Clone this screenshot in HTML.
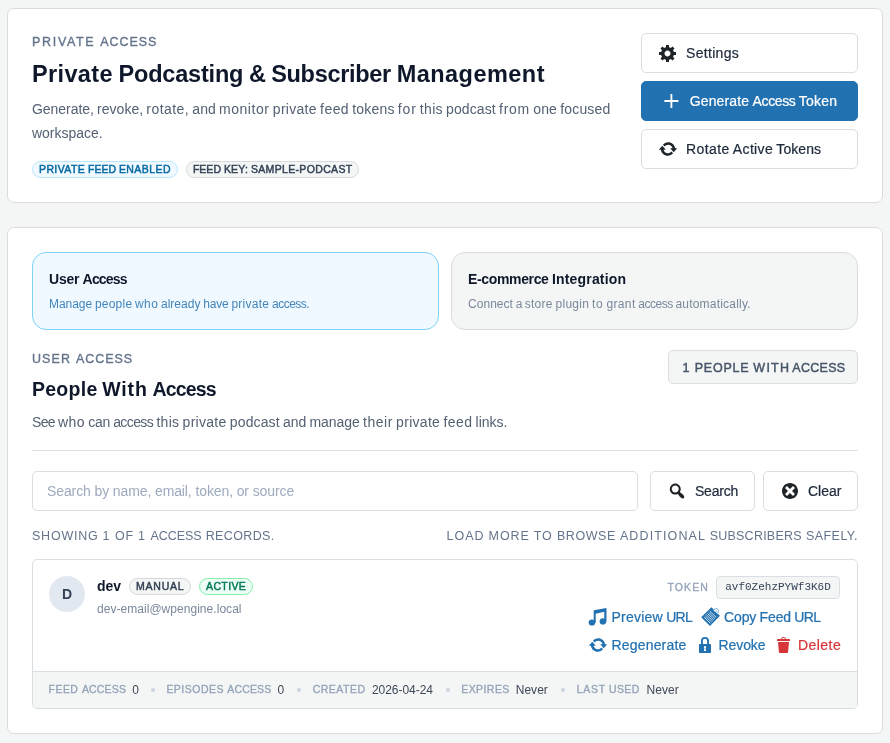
<!DOCTYPE html>
<html lang="en">
<head>
<meta charset="utf-8">
<title>Private Podcasting &amp; Subscriber Management</title>
<style>
:root{--ff:"Liberation Sans",sans-serif;--mono:"Liberation Mono",monospace}
*{box-sizing:border-box;margin:0;padding:0}
html,body{width:890px;height:743px;overflow:hidden}
body{will-change:transform;background:#f4f6f6;font-family:var(--ff);color:#0f172a;font-size:14px;position:relative}
.abs{position:absolute;white-space:nowrap}
.w{display:inline-block;white-space:nowrap}
.card{position:absolute;left:7px;width:876px;background:#fff;border:1px solid #dcdcde;border-radius:7px}
#c1{top:8px;height:195px}
#c2{top:227px;height:507px}
#c2>.in{position:absolute;left:0;top:1px;width:874px;height:500px}
.eyebrow{font-size:12.5px;letter-spacing:.14em;color:#64748b;font-weight:500;line-height:16px}
h1{font-size:23.5px;font-weight:700;color:#0f172a;line-height:30px}
h2{font-size:19.5px;font-weight:700;color:#0f172a;line-height:26px}
.desc{color:#546173;font-size:14px;line-height:24px}
.chip{display:inline-block;border:1px solid #d5d8dc;border-radius:999px;background:#f4f6f6;color:#334155;font-size:10.5px;font-weight:400;-webkit-text-stroke:.45px currentColor;letter-spacing:.02em;height:17px;line-height:15px;padding:0 6px;white-space:nowrap}
.chip.blue{background:#f0f9ff;border-color:#bae6fd;color:#0369a1}
.chip.green{background:#ecfdf5;border-color:#86efac;color:#047857}
.btn{position:absolute;display:flex;align-items:center;height:40px;border:1px solid #dadde2;border-radius:5px;background:#fff;color:#1e293b;font-size:14px;font-weight:500;padding:0 16px;gap:8px;white-space:nowrap}
button.btn{font-family:inherit;margin:0;cursor:pointer;text-align:left;line-height:normal;-webkit-appearance:none;appearance:none}
a.act{text-decoration:none;cursor:pointer}
.btn{-webkit-text-stroke:.22px currentColor}
.act{-webkit-text-stroke:.22px currentColor}
.eyebrow{-webkit-text-stroke:.35px currentColor}
.foot .l{-webkit-text-stroke:.3px currentColor}
.btn svg{width:20px;height:20px;flex:none;fill:#1d2327}
.btn.primary svg{fill:#fff}
.btn.primary{background:#2271b1;border-color:#2271b1;color:#fff;justify-content:center}
.tab{position:absolute;top:23px;width:407px;height:78px;border:1px solid #dcdcde;border-radius:14px;background:#f4f6f6;padding:16px}
.tab.on{background:#f0f9ff;border-color:#7dd3fc}
.tab .tt{font-size:14px;font-weight:700;line-height:20px;color:#0f172a;white-space:nowrap}
.tab .ts{font-size:12px;line-height:18px;color:#7a879b;margin-top:6px;white-space:nowrap}
.tab.on .ts{color:#4185bc}
.srch{border:1px solid #dadde2;border-radius:5px;background:#fff;padding:0 14px;font-family:inherit;font-size:14px;color:#0f172a;outline:none;margin:0;letter-spacing:-.11px}
.srch::placeholder{color:#9daabe;opacity:1}
.meta{font-size:12.5px;letter-spacing:.08em;color:#64748b;line-height:16px}
.rec{position:absolute;left:24px;top:330px;width:826px;height:150px;border:1px solid #d9dee5;border-radius:5px;background:#fff;overflow:hidden}
.foot{position:absolute;left:0;right:0;top:111px;height:38px;border-top:1px solid #d9dee5;background:#f4f6f6;white-space:nowrap}
.foot .l{position:absolute;top:10px;line-height:14px;font-size:10.5px;letter-spacing:.08em;font-weight:500;color:#94a3b8}
.foot .v{position:absolute;top:10px;line-height:16px;font-size:12px;color:#3d4756}
.foot i{position:absolute;top:16px;width:4px;height:4px;border-radius:50%;background:#cbd5e1}
.act{position:absolute;display:flex;align-items:center;font-size:14px;font-weight:500;color:#2271b1;height:20px;line-height:20px;white-space:nowrap}
.act svg{width:20px;height:20px;fill:currentColor;margin-right:4px;flex:none}
.act.red{color:#d63638}
</style>
</head>
<body>
<div class="card" id="c1">
  <div class="abs eyebrow" style="left:24px;top:25px"><span class="t"><span class="w" style="width:68.23px;letter-spacing:1.68px">PRIVATE </span><span class="w" style="width:57.11px;letter-spacing:0.95px">ACCESS</span></span></div>
  <h1 class="abs" style="left:24px;top:50px"><span class="t"><span class="w" style="width:86.62px;letter-spacing:0.36px">Private </span><span class="w" style="width:130.27px;letter-spacing:-0.21px">Podcasting </span><span class="w" style="width:22.31px;letter-spacing:-0.38px">&amp; </span><span class="w" style="width:125.47px;letter-spacing:-0.3px">Subscriber </span><span class="w" style="width:148.33px;letter-spacing:0.47px">Management</span></span></h1>
  <div class="abs desc" style="left:24px;top:88px"><span class="t"><span class="w" style="width:65.09px;letter-spacing:-0.04px">Generate, </span><span class="w" style="width:49.25px;letter-spacing:0.02px">revoke, </span><span class="w" style="width:46.03px;letter-spacing:0.44px">rotate, </span><span class="w" style="width:26.61px;letter-spacing:0.01px">and </span><span class="w" style="width:53.86px;letter-spacing:0.56px">monitor </span><span class="w" style="width:47.31px;letter-spacing:0.29px">private </span><span class="w" style="width:32.19px;letter-spacing:0.43px">feed </span><span class="w" style="width:45.52px;letter-spacing:0.17px">tokens </span><span class="w" style="width:22.05px;letter-spacing:0.83px">for </span><span class="w" style="width:26.2px;letter-spacing:0.3px">this </span><span class="w" style="width:53.03px;letter-spacing:0.11px">podcast </span><span class="w" style="width:34.12px;letter-spacing:0.73px">from </span><span class="w" style="width:27.14px;letter-spacing:0.19px">one </span><span class="w" style="width:50.02px;letter-spacing:0.14px">focused</span></span><br><span class="t"><span class="w" style="width:70.53px;letter-spacing:-0.03px">workspace.</span></span></div>
  <div class="abs" style="left:24px;top:152px;display:flex;gap:8px">
    <span class="chip blue"><span class="t"><span class="w" style="width:48.94px;letter-spacing:0.39px">PRIVATE </span><span class="w" style="width:31px;letter-spacing:0.04px">FEED </span><span class="w" style="width:51.94px;letter-spacing:0.42px">ENABLED</span></span></span><span class="chip"><span class="t"><span class="w" style="width:31px;letter-spacing:0.04px">FEED </span><span class="w" style="width:27.03px;letter-spacing:0.21px">KEY: </span><span class="w" style="width:101.59px;letter-spacing:0.34px">SAMPLE-PODCAST</span></span></span>
  </div>
  <button type="button" class="btn" style="left:633px;top:24px;width:217px">
    <svg viewBox="0 0 20 20"><path d="M18 12h-2.180c-.170.700-.440 1.350-.810 1.930l1.540 1.540-2.100 2.100-1.540-1.540c-.580.360-1.230.630-1.910.790v2.180h-3v-2.180c-.680-.160-1.330-.430-1.910-.790l-1.540 1.540-2.120-2.120 1.540-1.540c-.360-.580-.630-1.230-.790-1.910h-2.180v-2.970h2.170c.160-.700.440-1.350.800-1.940l-1.540-1.540 2.100-2.100 1.540 1.540c.580-.370 1.240-.640 1.930-.810v-2.180h3v2.180c.680.160 1.330.430 1.910.790l1.540-1.540 2.120 2.120-1.540 1.540c.360.590.640 1.240.800 1.940h2.170v2.970zM9.500 13.500c1.660 0 3-1.340 3-3s-1.340-3-3-3-3 1.340-3 3 1.340 3 3 3z"/></svg>
    <span class="t"><span class="w" style="width:53.09px;letter-spacing:0.31px">Settings</span></span>
  </button>
  <button type="button" class="btn primary" style="left:633px;top:72px;width:217px">
    <svg viewBox="0 0 20 20" style="overflow:visible"><path d="M16.400 9.080v1.840h-6.080v6.080h-1.840v-6.080h-6.080v-1.840h6.080v-6.080h1.840v6.080z"/></svg>
    <span class="t"><span class="w" style="width:62.88px;letter-spacing:0.15px">Generate </span><span class="w" style="width:46.17px;letter-spacing:-0.37px">Access </span><span class="w" style="width:38.58px;letter-spacing:0.24px">Token</span></span>
  </button>
  <button type="button" class="btn" style="left:633px;top:120px;width:217px">
    <svg viewBox="0 0 20 20"><path d="M10.200 3.280c3.530 0 6.430 2.610 6.920 6h2.080l-3.500 4-3.500-4h2.320c-.450-1.970-2.210-3.450-4.320-3.450-1.450 0-2.730.710-3.540 1.780l-1.720-1.960c1.270-1.450 3.150-2.370 5.260-2.370zM9.800 16.720c-3.520 0-6.430-2.610-6.920-6h-2.080l3.500-4c1.170 1.330 2.330 2.670 3.500 4h-2.320c.450 1.970 2.210 3.450 4.320 3.450 1.450 0 2.730-.710 3.540-1.780l1.720 1.960c-1.260 1.450-3.150 2.370-5.260 2.370z"/></svg>
    <span class="t"><span class="w" style="width:46.86px;letter-spacing:0.39px">Rotate </span><span class="w" style="width:43.45px;letter-spacing:0.34px">Active </span><span class="w" style="width:44.89px;letter-spacing:0.09px">Tokens</span></span>
  </button>
</div>

<div class="card" id="c2"><div class="in">
  <div class="tab on" style="left:24px"><div class="tt"><span class="t"><span class="w" style="width:33.58px;letter-spacing:-0.22px">User </span><span class="w" style="width:44.22px;letter-spacing:-0.8px">Access</span></span></div><div class="ts"><span class="t"><span class="w" style="width:45.89px;letter-spacing:-0.04px">Manage </span><span class="w" style="width:40.2px;letter-spacing:0.23px">people </span><span class="w" style="width:25.94px;letter-spacing:0.39px">who </span><span class="w" style="width:42.2px;letter-spacing:0.01px">already </span><span class="w" style="width:28.22px;letter-spacing:-0.14px">have </span><span class="w" style="width:40.55px;letter-spacing:0.25px">private </span><span class="w" style="width:37.25px;letter-spacing:-0.49px">access.</span></span></div></div>
  <div class="tab" style="left:443px"><div class="tt"><span class="t"><span class="w" style="width:83.91px;letter-spacing:-0.35px">E-commerce </span><span class="w" style="width:74.33px;letter-spacing:0.18px">Integration</span></span></div><div class="ts"><span class="t"><span class="w" style="width:47.75px;letter-spacing:0.04px">Connect </span><span class="w" style="width:8.92px;letter-spacing:-0.52px">a </span><span class="w" style="width:30.84px;letter-spacing:0.28px">store </span><span class="w" style="width:36.44px;letter-spacing:0.28px">plugin </span><span class="w" style="width:14.47px;letter-spacing:0.85px">to </span><span class="w" style="width:31.94px;letter-spacing:0.37px">grant </span><span class="w" style="width:37.05px;letter-spacing:-0.51px">access </span><span class="w" style="width:75.42px;letter-spacing:0.21px">automatically.</span></span></div></div>

  <div class="abs eyebrow" style="left:24px;top:122px"><span class="t"><span class="w" style="width:43.97px;letter-spacing:1.09px">USER </span><span class="w" style="width:57.11px;letter-spacing:0.95px">ACCESS</span></span></div>
  <h2 class="abs" style="left:24px;top:147px"><span class="t"><span class="w" style="width:70.22px;letter-spacing:0.26px">People </span><span class="w" style="width:50.27px;letter-spacing:0.86px">With </span><span class="w" style="width:63.16px;letter-spacing:-0.86px">Access</span></span></h2>
  <div class="abs desc" style="left:24px;top:181px"><span class="t"><span class="w" style="width:26.02px;letter-spacing:-0.71px">See </span><span class="w" style="width:30.28px;letter-spacing:0.46px">who </span><span class="w" style="width:24.89px;letter-spacing:-0.3px">can </span><span class="w" style="width:43.23px;letter-spacing:-0.59px">access </span><span class="w" style="width:26.2px;letter-spacing:0.3px">this </span><span class="w" style="width:47.31px;letter-spacing:0.29px">private </span><span class="w" style="width:53.03px;letter-spacing:0.11px">podcast </span><span class="w" style="width:26.61px;letter-spacing:0.01px">and </span><span class="w" style="width:53.47px;letter-spacing:-0.06px">manage </span><span class="w" style="width:33.16px;letter-spacing:0.54px">their </span><span class="w" style="width:47.31px;letter-spacing:0.29px">private </span><span class="w" style="width:32.19px;letter-spacing:0.43px">feed </span><span class="w" style="width:31.66px;letter-spacing:-0.04px">links.</span></span></div>
  <div class="abs" style="left:660px;top:121px;width:190px;height:34px;border:1px solid #dadde2;border-radius:5px;background:#f4f6f6;text-align:center;font-size:12.5px;font-weight:400;-webkit-text-stroke:.45px currentColor;letter-spacing:.07em;color:#475569;line-height:34px"><span class="t"><span class="w" style="width:12.25px;letter-spacing:1.3px">1 </span><span class="w" style="width:58.55px;letter-spacing:0.75px">PEOPLE </span><span class="w" style="width:41.03px;letter-spacing:1.27px">WITH </span><span class="w" style="width:53.17px;letter-spacing:0.29px">ACCESS</span></span></div>
  <div class="abs" style="left:24px;top:221px;width:826px;height:1px;background:#dcdfe4"></div>

  <input class="abs srch" type="text" placeholder="Search by name, email, token, or source" style="left:24px;top:242px;width:606px;height:40px">
  <button type="button" class="btn" style="left:642px;top:242px;width:105px">
    <svg viewBox="0 0 20 20"><path d="M12.140 4.180c1.870 1.870 2.110 4.750.720 6.890.120.100.220.210.360.310.200.160.470.360.810.590.340.240.560.390.660.470.420.310.730.570.940.780.320.320.600.650.840 1 .250.350.440.690.590 1.040.140.350.210.680.180 1-.020.320-.140.590-.360.810s-.490.340-.810.360c-.310.020-.650-.040-.990-.190-.350-.140-.700-.340-1.040-.590-.350-.240-.680-.520-1-.840-.210-.210-.470-.520-.770-.930-.100-.130-.250-.350-.470-.660-.220-.320-.400-.570-.560-.780-.160-.200-.290-.350-.440-.500-2.070 1.090-4.690.760-6.440-.980-2.140-2.150-2.140-5.640 0-7.780 2.150-2.150 5.630-2.150 7.780 0zM10.730 10.540c1.360-1.370 1.360-3.580 0-4.950-1.370-1.370-3.590-1.370-4.950 0-1.370 1.370-1.370 3.580 0 4.950 1.360 1.370 3.580 1.370 4.950 0z"/></svg>
    <span class="t"><span class="w" style="width:43.05px;letter-spacing:-0.22px">Search</span></span>
  </button>
  <button type="button" class="btn" style="left:755px;top:242px;width:95px">
    <svg viewBox="0 0 20 20"><path d="M10 2c4.420 0 8 3.580 8 8s-3.580 8-8 8-8-3.580-8-8 3.580-8 8-8zM15 13l-3-3 3-3-2-2-3 3-3-3-2 2 3 3-3 3 2 2 3-3 3 3z"/></svg>
    <span class="t"><span class="w" style="width:33.41px;letter-spacing:-0.01px">Clear</span></span>
  </button>

  <div class="abs meta" style="left:24px;top:299px"><span class="t"><span class="w" style="width:70.52px;letter-spacing:0.77px">SHOWING </span><span class="w" style="width:12.41px;letter-spacing:1.42px">1 </span><span class="w" style="width:23.05px;letter-spacing:0.83px">OF </span><span class="w" style="width:12.41px;letter-spacing:1.42px">1 </span><span class="w" style="width:55.31px;letter-spacing:-0.02px">ACCESS </span><span class="w" style="width:68.95px;letter-spacing:0.37px">RECORDS.</span></span></div>
  <div class="abs meta" style="right:24px;top:299px;margin-right:0"><span class="t"><span class="w" style="width:42.07px;letter-spacing:1px">LOAD </span><span class="w" style="width:45.08px;letter-spacing:0.89px">MORE </span><span class="w" style="width:23.27px;letter-spacing:1.04px">TO </span><span class="w" style="width:62.95px;letter-spacing:0.56px">BROWSE </span><span class="w" style="width:89.75px;letter-spacing:1.12px">ADDITIONAL </span><span class="w" style="width:96.33px;letter-spacing:0.24px">SUBSCRIBERS </span><span class="w" style="width:52.05px;letter-spacing:0.45px">SAFELY.</span></span></div>

  <div class="rec">
    <div class="abs" style="left:16px;top:16px;width:36px;height:36px;border-radius:50%;background:#e2e8f0;color:#334155;font-weight:700;font-size:14px;line-height:36px;text-align:center"><span class="t"><span class="w" style="width:10.22px;letter-spacing:0.09px">D</span></span></div>
    <div class="abs" style="left:64px;top:16px;font-size:14px;font-weight:700;line-height:20px;color:#0f172a"><span class="t"><span class="w" style="width:23.95px;letter-spacing:-0.06px">dev</span></span></div>
    <span class="chip abs" style="left:96px;top:18px"><span class="t"><span class="w" style="width:48.38px;letter-spacing:0.77px">MANUAL</span></span></span>
    <span class="chip green abs" style="left:166px;top:18px"><span class="t"><span class="w" style="width:40.23px;letter-spacing:0.38px">ACTIVE</span></span></span>
    <div class="abs" style="left:64px;top:40px;font-size:12px;line-height:18px;color:#7a879b"><span class="t"><span class="w" style="width:144.59px;letter-spacing:0.04px">dev-email@wpengine.local</span></span></div>

    <div class="abs" style="right:148px;top:20px;font-size:10.5px;letter-spacing:.08em;font-weight:400;-webkit-text-stroke:.3px currentColor;color:#94a3b8;line-height:14px"><span class="t"><span class="w" style="width:41.5px;letter-spacing:1.1px">TOKEN</span></span></div>
    <div class="abs" style="left:683px;top:16px;width:124px;height:23px;border:1px solid #d9dee5;border-radius:4px;background:#f4f6f6;font-family:var(--mono);font-size:11px;line-height:21px;text-align:center;color:#334155">avf0ZehzPYWf3K6D</div>

    <a class="act" style="left:554.5px;top:47px"><svg viewBox="0 0 20 20"><path d="M5.700 3.300L18.500 1.070V14.600H16.250V4.700L7.750 6.750V15.600H5.700z"/><ellipse cx="3.950" cy="15.500" rx="3.300" ry="3.100"/><ellipse cx="14.900" cy="14.450" rx="3.300" ry="3.100"/></svg><span class="t"><span class="w" style="width:54.67px;letter-spacing:0.23px">Preview </span><span class="w" style="width:25.98px;letter-spacing:-0.68px">URL</span></span></a>
    <a class="act" style="left:667px;top:47px"><svg viewBox="0 0 20 20" style="overflow:visible"><path d="M11.410.2L19.950 8.770 9.990 18.950 1.200 10.180z"/><path d="M12.830 3.100l5.060 4.050v-4.460z" fill="#fff"/><circle cx="16.070" cy="4.100" r="2.500" fill="none" stroke="currentColor" stroke-width=".9" opacity=".6"/><circle cx="16.070" cy="4.300" r=".55"/><path d="M9.79 4.11l6.28 6.07M8.66 5.32l6.28 6.07M7.52 6.54l6.28 6.07M6.39 7.75l6.28 6.07M5.25 8.97l6.28 6.07M4.12 10.18l6.28 6.07" fill="none" stroke="#fff" stroke-width=".75"/></svg><span class="t"><span class="w" style="width:35.47px;letter-spacing:-0.12px">Copy </span><span class="w" style="width:34.81px;letter-spacing:-0.09px">Feed </span><span class="w" style="width:25.98px;letter-spacing:-0.68px">URL</span></span></a>
    <a class="act" style="left:554.5px;top:75px"><svg viewBox="0 0 20 20"><path d="M10.200 3.280c3.530 0 6.430 2.610 6.920 6h2.080l-3.500 4-3.500-4h2.320c-.450-1.970-2.210-3.450-4.320-3.450-1.450 0-2.730.710-3.540 1.780l-1.720-1.960c1.270-1.450 3.150-2.370 5.260-2.370zM9.800 16.720c-3.520 0-6.430-2.610-6.920-6h-2.080l3.500-4c1.170 1.330 2.330 2.670 3.500 4h-2.320c.450 1.970 2.210 3.450 4.320 3.450 1.450 0 2.730-.710 3.540-1.780l1.720 1.960c-1.260 1.450-3.150 2.370-5.260 2.370z"/></svg><span class="t"><span class="w" style="width:74.94px;letter-spacing:0.18px">Regenerate</span></span></a>
    <a class="act" style="left:661.5px;top:75px"><svg viewBox="0 0 20 20"><path fill-rule="evenodd" d="M6 9V6a4 4 0 0 1 8 0v3h1c.550 0 1 .450 1 1v7c0 .550-.450 1-1 1h-10c-.550 0-1-.450-1-1v-7c0-.550.450-1 1-1zM7.850 9h4.300V6a2.150 2.150 0 0 0-4.300 0zM10 11.100a1.150 1.150 0 0 0-.600 2.130l-.450 2.670h2.100l-.450-2.670a1.150 1.150 0 0 0-.600-2.130z"/></svg><span class="t"><span class="w" style="width:46.94px;letter-spacing:-0.09px">Revoke</span></span></a>
    <a class="act red" style="left:741px;top:75px"><svg viewBox="0 0 20 20"><path d="M12 4h3c.550 0 1 .450 1 1v1h-13v-1c0-.550.450-1 1-1h3c.230-1.140 1.290-2 2.500-2s2.270.860 2.500 2zM8 4h3c-.210-.580-.850-1-1.500-1s-1.290.420-1.500 1zM4 7h11l-.900 10.100c-.050.510-.480.900-.990.900h-7.220c-.510 0-.940-.390-.990-.900z"/></svg><span class="t"><span class="w" style="width:43.19px;letter-spacing:0.45px">Delete</span></span></a>

    <div class="foot">
      <span class="l" style="left:15.5px"><span class="t"><span class="w" style="width:33.38px;letter-spacing:0.48px">FEED </span><span class="w" style="width:44.22px;letter-spacing:0.17px">ACCESS</span></span></span>
      <span class="v" style="left:99.2px"><span class="t"><span class="w" style="width:6.78px;letter-spacing:0.09px">0</span></span></span>
      <i style="left:118.1px"></i>
      <span class="l" style="left:133.4px"><span class="t"><span class="w" style="width:60.94px;letter-spacing:0.48px">EPISODES </span><span class="w" style="width:44.06px;letter-spacing:0.15px">ACCESS</span></span></span>
      <span class="v" style="left:244.5px"><span class="t"><span class="w" style="width:6.78px;letter-spacing:0.09px">0</span></span></span>
      <i style="left:263.8px"></i>
      <span class="l" style="left:279.7px"><span class="t"><span class="w" style="width:52.8px;letter-spacing:0.48px">CREATED</span></span></span>
      <span class="v" style="left:338.9px"><span class="t"><span class="w" style="width:61.09px;letter-spacing:-0.03px">2026-04-24</span></span></span>
      <i style="left:412.9px"></i>
      <span class="l" style="left:428.2px"><span class="t"><span class="w" style="width:48.6px;letter-spacing:0.44px">EXPIRES</span></span></span>
      <span class="v" style="left:482.7px"><span class="t"><span class="w" style="width:32.2px;letter-spacing:0.04px">Never</span></span></span>
      <i style="left:527.8px"></i>
      <span class="l" style="left:543.8px"><span class="t"><span class="w" style="width:32.22px;letter-spacing:0.69px">LAST </span><span class="w" style="width:30.68px;letter-spacing:0.37px">USED</span></span></span>
      <span class="v" style="left:613.6px"><span class="t"><span class="w" style="width:32.2px;letter-spacing:0.04px">Never</span></span></span>
    </div>
  </div>
</div></div>
</body>
</html>
